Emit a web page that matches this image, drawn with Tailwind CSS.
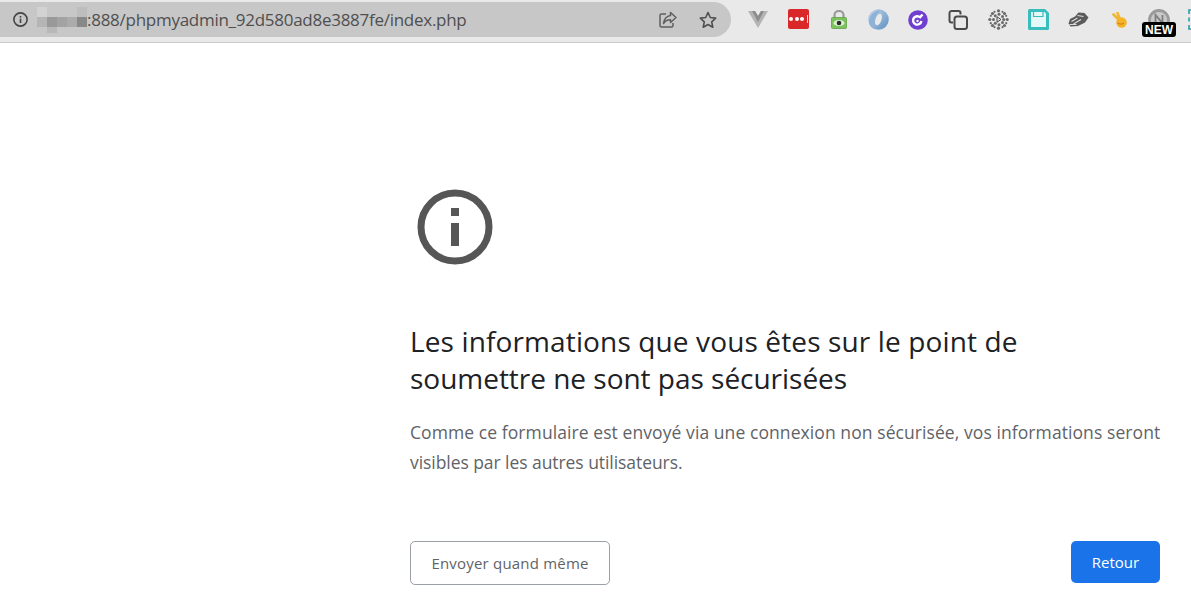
<!DOCTYPE html>
<html lang="en">
<head>
    <meta charset="UTF-8">
    <meta name="viewport" content="width=device-width, initial-scale=1.0">
    <title>Formulaire non sécurisé</title>
    <script src="https://cdn.jsdelivr.net/npm/@tailwindcss/browser@4"></script>
</head>
<body class="bg-white overflow-hidden font-['Open_Sans',sans-serif]">
    <div class="w-[1191px] h-[598px] flex flex-col">
        <!-- Browser toolbar -->
        <div class="h-[43px] shrink-0 bg-[#e9e9e9] border-b border-[#cbcbcb] flex items-start">
            <div class="mt-[2px] h-[35px] w-[731px] shrink-0 bg-[#c7c7c7] rounded-r-full rounded-l-[18px] flex items-center">
                <svg class="ml-[12px] w-[17px] h-[17px] shrink-0" viewBox="0 0 17 17" fill="none">
                    <circle cx="8.5" cy="8.5" r="6.6" stroke="#444" stroke-width="1.6"/>
                    <rect x="7.7" y="7.6" width="1.6" height="4.4" fill="#444"/>
                    <rect x="7.7" y="5" width="1.6" height="1.6" fill="#444"/>
                </svg>
                <!-- blurred host -->
                <div class="ml-[8px] w-[50px] h-[26px] shrink-0 grid grid-cols-[repeat(5,10px)] grid-rows-[10px_10px_6px]">
                    <div class="bg-[#d2d2d2]"></div><div class="bg-[#c7c7c7]"></div><div class="bg-[#c7c7c7]"></div><div class="bg-[#c7c7c7]"></div><div class="bg-[#bdbdbd]"></div>
                    <div class="bg-[#b5b5b5]"></div><div class="bg-[#999999]"></div><div class="bg-[#a3a3a3]"></div><div class="bg-[#ababab]"></div><div class="bg-[#888888]"></div>
                    <div class="bg-[#c7c7c7]"></div><div class="bg-[#b8b8b8]"></div><div class="bg-[#c7c7c7]"></div><div class="bg-[#c7c7c7]"></div><div class="bg-[#c7c7c7]"></div>
                </div>
                <span class="text-[17px] tracking-[-0.27px] text-[#4f4f4f] whitespace-nowrap">:888/phpmyadmin_92d580ad8e3887fe/index.php</span>
                <div class="ml-auto mr-[13px] flex items-center gap-[20px]">
                    <svg class="w-[20px] h-[20px]" viewBox="0 0 20 20" fill="none" stroke="#5f5f5f" stroke-width="1.5">
                        <path d="M8 4H3.500A1.500 1.500 0 0 0 2 5.500v10A1.500 1.500 0 0 0 3.500 17h10a1.500 1.500 0 0 0 1.500-1.500V13"/>
                        <path d="M12.500 2.500 18 7.500l-5.500 5V9.700C9 9.700 7 11 5.500 13.500 6 9.500 8.500 6 12.500 5.400Z" stroke-linejoin="round"/>
                    </svg>
                    <svg class="w-[20px] h-[20px]" viewBox="0 0 20 20" fill="none" stroke="#4f4f4f" stroke-width="1.600" stroke-linejoin="round">
                        <path d="M10 2.500 12.300 7.500l5.400.6-4 3.700 1.100 5.400L10 14.500l-4.800 2.700 1.100-5.400-4-3.700 5.400-.6Z"/>
                    </svg>
                </div>
            </div>
            <!-- Extensions -->
            <div class="relative flex-1 h-[38px]">
                <svg class="absolute left-[17px] top-[11px] w-[20px] h-[17px]" viewBox="0 0 20 17">
                    <path d="M0 0h7l3 5 3-5h7L10 17Z" fill="#b4b4b4"/>
                    <path d="M4 0h3l3 5 3-5h3L10 11Z" fill="#8c8c8c"/>
                </svg>
                <div class="absolute left-[57px] top-[9px] w-[21px] h-[20px] bg-[#d9272a] rounded-[2px] flex items-center justify-center gap-[1.5px]">
                    <i class="block w-[4px] h-[4px] rounded-full bg-white"></i>
                    <i class="block w-[4px] h-[4px] rounded-full bg-white"></i>
                    <i class="block w-[4px] h-[4px] rounded-full bg-white"></i>
                    <i class="block w-px h-[8px] ml-px bg-white/80"></i>
                </div>
                <svg class="absolute left-[100px] top-[10px] w-[16px] h-[19px]" viewBox="0 0 16 19">
                    <path d="M3.500 8V5a4.500 4 0 0 1 9 0v3" fill="none" stroke="#9a9a9a" stroke-width="2.200"/>
                    <rect x=".5" y="7.500" width="15" height="11" rx="1" fill="#7cc35e" stroke="#5f9f47" stroke-width=".8"/>
                    <ellipse cx="8" cy="13" rx="5.500" ry="3" fill="#dff0d5"/>
                    <circle cx="8" cy="13" r="2.300" fill="#2b2b2b"/>
                </svg>
                <svg class="absolute left-[137px] top-[9px] w-[21px] h-[21px]" viewBox="0 0 21 21">
                    <defs>
                        <linearGradient id="blob" x1="0" y1="0" x2="1" y2="1">
                            <stop offset="0" stop-color="#c4d8ea"/>
                            <stop offset="1" stop-color="#5d8fc0"/>
                        </linearGradient>
                    </defs>
                    <circle cx="10.500" cy="10.500" r="10.300" fill="url(#blob)"/>
                    <path d="M1 13C1 6 7 1.500 13 .8 9 4 7 8 7.500 13 8 17 6 20 6 20 3 18.500 1 16 1 13Z" fill="#8fb3d6"/>
                    <ellipse cx="10.500" cy="10.500" rx="3" ry="6" transform="rotate(20 10.500 10.500)" fill="#e9e9e9"/>
                </svg>
                <svg class="absolute left-[177px] top-[10px] w-[20px] h-[20px]" viewBox="0 0 20 20">
                    <circle cx="10" cy="10" r="9.800" fill="#6f3fd0"/>
                    <path d="M12.300 7.500A4.200 4.200 0 1 0 13.400 11" fill="none" stroke="#fff" stroke-width="2.400"/>
                    <path d="M11.500 8 14.500 4.500" stroke="#fff" stroke-width="2.400"/>
                    <circle cx="9.500" cy="11" r="1.200" fill="#fff"/>
                </svg>
                <svg class="absolute left-[217px] top-[10px] w-[20px] h-[20px]" viewBox="0 0 20 20" fill="none" stroke="#4a4a4a" stroke-width="2">
                    <path d="M5 12.500H3.500a2 2 0 0 1-2-2V3a2 2 0 0 1 2-2h7a2 2 0 0 1 2 2v1.500"/>
                    <rect x="6.500" y="6.500" width="12.500" height="12.500" rx="2.500"/>
                </svg>
                <svg class="absolute left-[257px] top-[9px] w-[21px] h-[21px]" viewBox="0 0 21 21" fill="#6b6b6b">
                    <circle cx="10.500" cy="1.800" r="1.600"/><circle cx="10.500" cy="19.200" r="1.600"/><circle cx="1.800" cy="10.500" r="1.600"/><circle cx="19.200" cy="10.500" r="1.600"/>
                    <circle cx="4.500" cy="4.500" r="1.600"/><circle cx="16.500" cy="4.500" r="1.600"/><circle cx="4.500" cy="16.500" r="1.600"/><circle cx="16.500" cy="16.500" r="1.600"/>
                    <circle cx="6.500" cy="2.800" r="1.100"/><circle cx="14.500" cy="2.800" r="1.100"/><circle cx="6.500" cy="18.200" r="1.100"/><circle cx="14.500" cy="18.200" r="1.100"/>
                    <circle cx="2.800" cy="6.800" r="1.100"/><circle cx="18.200" cy="6.800" r="1.100"/><circle cx="2.800" cy="14.200" r="1.100"/><circle cx="18.200" cy="14.200" r="1.100"/>
                    <circle cx="5.500" cy="10.500" r="1.500"/><circle cx="7.300" cy="6.700" r="1.500"/><circle cx="7.300" cy="14.300" r="1.500"/><circle cx="11" cy="5.300" r="1.500"/><circle cx="11" cy="15.700" r="1.500"/><circle cx="14.500" cy="7.500" r="1.500"/><circle cx="14.500" cy="13.500" r="1.500"/><circle cx="15.700" cy="10.500" r="1.500"/>
                    <path d="M9 7.800 13 10.500 9 13.200Z" fill="#e9e9e9" stroke="#444" stroke-width="1"/>
                </svg>
                <svg class="absolute left-[297px] top-[9px] w-[21px] h-[21px]" viewBox="0 0 21 21">
                    <path d="M0 1.500A1.500 1.500 0 0 1 1.500 0H17l4 4v15.500a1.500 1.500 0 0 1-1.500 1.500h-18A1.500 1.500 0 0 1 0 19.500Z" fill="#38bcbc"/>
                    <path d="M3 3h13.500L18 4.500V18H3Z" fill="#e6f7f7"/>
                    <path d="M5.500 3v4.500h9.500V3" fill="none" stroke="#38bcbc" stroke-width="1.200"/>
                </svg>
                <svg class="absolute left-[337px] top-[12px] w-[21px] h-[15px]" viewBox="0 0 21 15">
                    <path d="M.5 11.500 2 7l5-2.500L10.500.5l6 .5 4 4.500-3.500 5-7 3.500-7.500.5Z" fill="#5b5b5b"/>
                    <path d="M3.500 9.500l6-3.500M5.500 12l7.500-4.500M9.500 3.500l6 1M1.500 12.500h7" stroke="#dcdcdc" stroke-width="1.200" fill="none"/>
                </svg>
                <svg class="absolute left-[381px] top-[12px] w-[15px] h-[16px]" viewBox="0 0 15 16">
                    <path d="M7 8 1.500 2.500M8 7.500 5.500 1" stroke="#f2b632" stroke-width="2.600" stroke-linecap="round"/>
                    <circle cx="9.500" cy="10.500" r="5.200" fill="#f5b325"/>
                    <path d="M5.500 11c2 1.500 4.500 1.500 6.500 0" stroke="#c9761a" stroke-width="1" fill="none"/>
                </svg>
                <svg class="absolute left-[417px] top-[9px] w-[22px] h-[14px]" viewBox="0 0 22 14">
                    <circle cx="11" cy="11" r="9.500" fill="#c9c9c9" stroke="#9a9a9a" stroke-width="2.800"/>
                    <path d="M7.500 14V6l7 8V6" fill="none" stroke="#7e7e7e" stroke-width="1.800"/>
                </svg>
                <span class="absolute left-[411px] top-[22px] h-[15px] w-[34px] bg-black rounded-[3px] flex items-center justify-center text-white text-[12px] font-bold leading-none font-['Liberation_Sans',sans-serif]">NEW</span>
                <svg class="absolute left-[457px] top-[9px] w-[3px] h-[21px]" viewBox="0 0 3 21" fill="none" stroke="#2a9fa8" stroke-width="1.600">
                    <path d="M3 1H1v4M1 8.500v4M1 16v4h2"/>
                </svg>
            </div>
        </div>

        <!-- Interstitial -->
        <main class="flex-1 pl-[410px] pr-[31px] flex flex-col">
            <svg class="mt-[146px] ml-[7px] w-[76px] h-[76px] shrink-0" viewBox="0 0 76 76" fill="none">
                <circle cx="38" cy="38" r="34" stroke="#565656" stroke-width="7"/>
                <rect x="34" y="34" width="8" height="23" fill="#565656"/>
                <rect x="34" y="19" width="8" height="8" fill="#565656"/>
            </svg>
            <h1 class="mt-[58px] text-[28px] leading-[37px] font-normal text-[#202124] tracking-[0.13px]">Les informations que vous êtes sur le point de<br><span class="tracking-[-0.02px]">soumettre ne sont pas sécurisées</span></h1>
            <p class="mt-[20px] text-[17.5px] leading-[30px] text-[#5f6368] tracking-[0.08px] whitespace-nowrap">Comme ce formulaire est envoyé via une connexion non sécurisée, vos informations seront<br><span class="tracking-[-0.06px]">visibles par les autres utilisateurs.</span></p>
            <div class="mt-[64px] flex justify-between items-start">
                <button class="w-[200px] h-[44px] bg-white border border-[#9aa0a6] rounded-[5px] text-[15px] tracking-[0.2px] text-[#5f6368]">Envoyer quand même</button>
                <button class="w-[89px] h-[42px] bg-[#1a73e8] rounded-[5px] text-[15px] text-white">Retour</button>
            </div>
        </main>
    </div>
</body>
</html>
